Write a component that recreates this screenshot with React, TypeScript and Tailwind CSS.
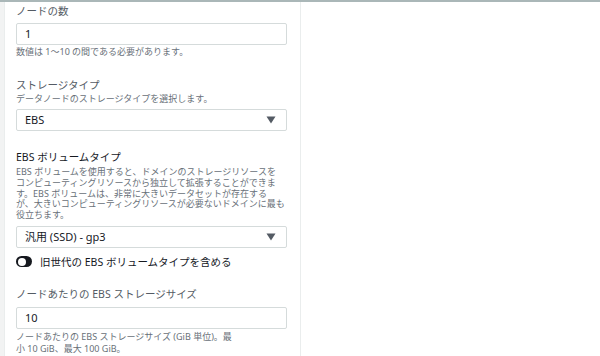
import React from "react";

function Caret() {
  return (
    <svg width="10" height="8" viewBox="0 0 10 8" className="shrink-0">
      <path d="M0.5 0.5 L9.5 0.5 L5 7.5 Z" fill="#545b64" />
    </svg>
  );
}

function TextInput({ value }: { value: string }) {
  return (
    <div className="h-[22px] border border-[#d5dbdb] rounded-[2px] flex items-center px-[8px] text-[11px] text-[#16191f]">
      {value}
    </div>
  );
}

function SelectBox({ value }: { value: string }) {
  return (
    <div className="h-[22px] border border-[#d5dbdb] rounded-[2px] flex items-center justify-between pl-[8px] pr-[10px] text-[11px] text-[#16191f]">
      <span>{value}</span>
      <Caret />
    </div>
  );
}

export default function App() {
  return (
    <div
      className="w-[600px] h-[356px] overflow-hidden bg-white flex border-t-2 border-[#aab7b8]"
      style={{ fontFamily: '"Noto Sans", "Noto Sans CJK JP", sans-serif' }}
    >
      <div className="w-[5px] bg-[#f2f3f3] border-r border-[#eaeded] shrink-0" />
      <div className="w-[296px] shrink-0 border-r border-[#eaeded] pl-[11px] pr-[13px]">
        <p className="text-[10.5px] leading-[16px] text-[#545b64] mt-[1px]">ノードの数</p>
        <div className="mt-[4px]">
          <TextInput value="1" />
        </div>
        <p className="text-[9px] leading-[11px] text-[#687078] mt-[1px]">数値は 1～10 の間である必要があります。</p>

        <p className="text-[10.5px] leading-[16px] text-[#545b64] mt-[20px]">ストレージタイプ</p>
        <p className="text-[9px] leading-[11px] text-[#687078]">データノードのストレージタイプを選択します。</p>
        <div className="mt-[5px]">
          <SelectBox value="EBS" />
        </div>

        <p className="text-[10.5px] leading-[16px] text-[#16191f] mt-[18px]">EBS ボリュームタイプ</p>
        <div className="text-[9px] leading-[10.8px] text-[#687078] mt-[2px] whitespace-nowrap">
          <p>EBS ボリュームを使用すると、ドメインのストレージリソースを</p>
          <p>コンピューティングリソースから独立して拡張することができま</p>
          <p>す。EBS ボリュームは、非常に大きいデータセットが存在する</p>
          <p>が、大きいコンピューティングリソースが必要ないドメインに最も</p>
          <p>役立ちます。</p>
        </div>
        <div className="mt-[5px]">
          <SelectBox value="汎用 (SSD) - gp3" />
        </div>
        <div className="flex items-center gap-[8px] mt-[6px] h-[16px]">
          <div className="w-[16px] h-[11px] rounded-full bg-[#16191f] flex items-center pl-[1.5px]">
            <div className="w-[8px] h-[8px] rounded-full bg-white" />
          </div>
          <span className="text-[10.5px] leading-[16px] text-[#16191f]">旧世代の EBS ボリュームタイプを含める</span>
        </div>

        <p className="text-[10.5px] leading-[16px] text-[#545b64] mt-[16px]">ノードあたりの EBS ストレージサイズ</p>
        <div className="mt-[5px]">
          <TextInput value="10" />
        </div>
        <div className="text-[9px] leading-[12px] text-[#687078] mt-[2px] whitespace-nowrap">
          <p>ノードあたりの EBS ストレージサイズ (GiB 単位)。最</p>
          <p>小 10 GiB、最大 100 GiB。</p>
        </div>
      </div>
      <div className="flex-1" />
    </div>
  );
}
